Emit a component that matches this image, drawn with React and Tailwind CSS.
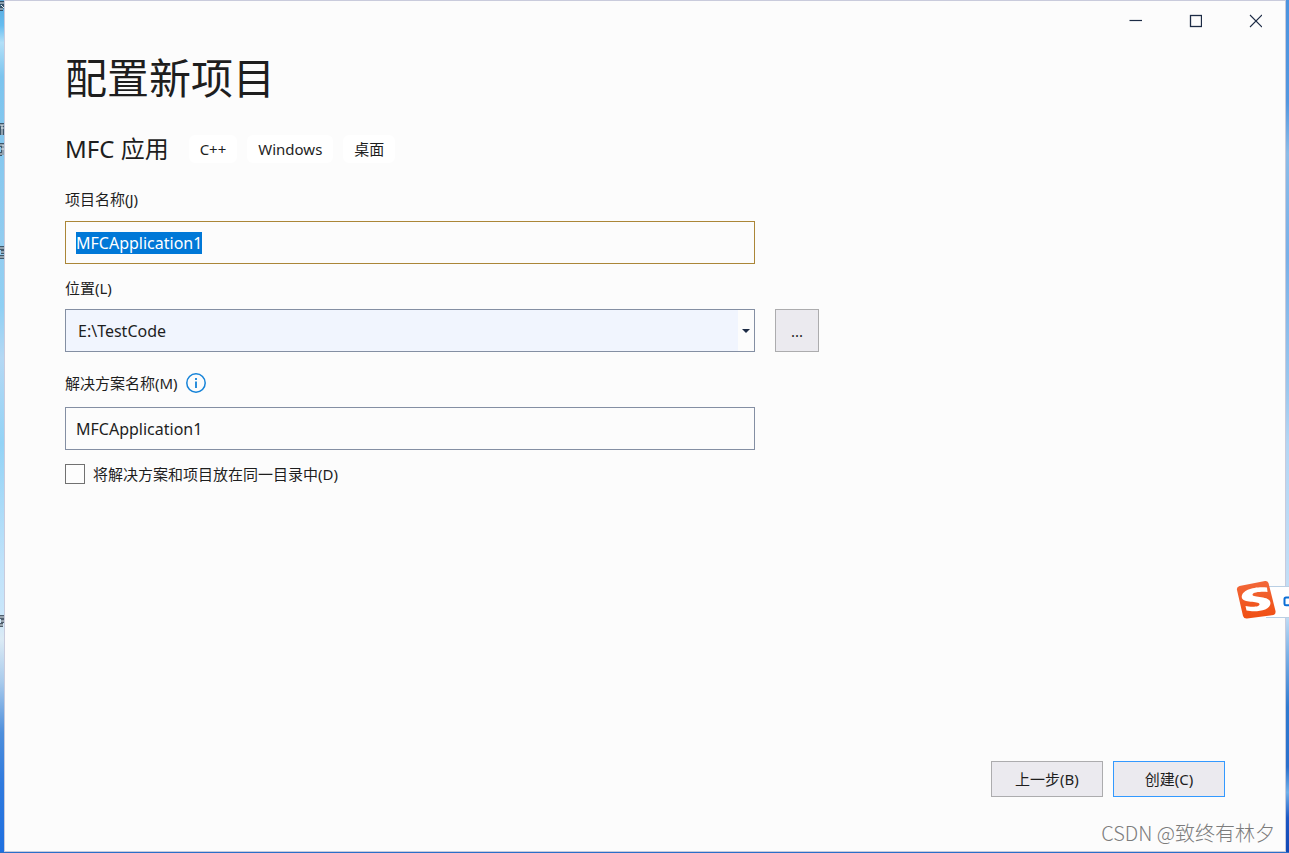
import { useEffect, useRef, useState } from "react";

const tags = ["C++", "Windows", "桌面"];

// pieces of desktop icon labels that stick out left of the window
const labelBits = [
  "M0 3h4M1 5l3 3M0 9h3",
  "M0 125h4M1 128h3M2 125v10",
  "M0 145h4M1 149h3M3 145v10M0 154h2",
  "M0 248h4M1 252h3M0 257h4",
  "M0 617h4M1 621h3M0 625h3",
];

function DesktopEdge() {
  return (
    <div className="relative w-1 shrink-0 overflow-hidden bg-[linear-gradient(to_bottom,#5aa9dc_0%,#66bdf0_3%,#b3e0f8_5%,#7cc4ee_9%,#93cdf0_30%,#8fd0f4_36%,#b4d8f4_42%,#93d3f6_52%,#bfe2fa_66%,#c9e6fa_72%,#dcebf5_75%,#a9cbec_80%,#4e8fdc_86%,#2f7ade_92%,#1f70e0_100%)]">
      <svg className="absolute left-0 top-0" width="4" height="640" fill="none" aria-hidden="true">
        {labelBits.map((d) => (
          <g key={d}>
            <path d={d} stroke="#25323f" strokeWidth="4" opacity="0.75" />
            <path d={d} stroke="#e4edf3" strokeWidth="1" />
          </g>
        ))}
      </svg>
    </div>
  );
}

function WindowButtons() {
  return (
    <div className="flex h-10 justify-end">
      <button type="button" aria-label="最小化" className="flex w-15 items-center justify-center">
        <svg width="14" height="14" stroke="#1c2b45" fill="none"><path d="M1.500 6.500h13" strokeWidth="1.200" /></svg>
      </button>
      <button type="button" aria-label="最大化" className="flex w-15 items-center justify-center">
        <svg width="14" height="14" stroke="#1c2b45" fill="none"><rect x="2.500" y="1.500" width="11" height="11" strokeWidth="1.300" /></svg>
      </button>
      <button type="button" aria-label="关闭" className="flex w-15 items-center justify-center">
        <svg width="14" height="14" stroke="#1c2b45" fill="none"><path d="M2 1l12 12M14 1L2 13" strokeWidth="1.100" /></svg>
      </button>
    </div>
  );
}

function ImeBar() {
  return (
    <div className="absolute right-0 top-[580px]">
      <svg width="53" height="40" viewBox="0 0 53 40" fill="none" role="img" aria-label="输入法">
        <path d="M30 6.500H53V37.500H30Z" fill="#fff" />
        <path d="M30 6.500H53M30 37.500H53" stroke="#b9cfe4" />
        <path d="M53 17.500H50Q48.500 17.500 48.500 19V24Q48.500 25.200 50 25.200H53" stroke="#0b6fd6" strokeWidth="2" />
        <defs>
          <linearGradient id="ime" x1="0" y1="0" x2="0" y2="1">
            <stop offset="0" stopColor="#f2683a" />
            <stop offset="1" stopColor="#f04e12" />
          </linearGradient>
        </defs>
        <path d="M3.500 6L29 1Q31.500 .6 32.500 3L39.500 31Q40 34 37.500 35L11 38.500Q8 38.800 7 36L1 10Q.3 7 3.500 6Z" fill="url(#ime)" />
        <path d="M31 7.500C20 6 5 9.500 5.800 17.500C6.500 23.500 23 20.800 23.500 24C24 27.500 14 27 9.500 26L10.500 30.500C19 32.500 34.500 31 34.500 23C34.500 15.500 16.500 18 16.500 14.800C16.500 12 26 11.500 31.500 12Z" fill="#fff" />
      </svg>
    </div>
  );
}

export default function App() {
  const [projectName, setProjectName] = useState("MFCApplication1");
  const [solutionName, setSolutionName] = useState("MFCApplication1");
  const [location, setLocation] = useState("E:\\TestCode");
  const [sameDir, setSameDir] = useState(false);
  const nameRef = useRef(null);

  useEffect(() => {
    nameRef.current.focus();
    nameRef.current.select();
  }, []);

  return (
    <div className="relative flex min-h-screen overflow-hidden bg-[#2a6fc9] pb-px font-['Noto_Sans','Noto_Sans_CJK_SC',sans-serif] text-[15px] leading-5 text-[#1e1e1e]">
      <DesktopEdge />

      <main className="flex min-w-0 flex-1 flex-col border border-[#c9cbdc] bg-[#fcfcfc]">
        <WindowButtons />

        <form className="flex flex-1 flex-col pl-15 pr-15 pb-[54px]" onSubmit={(e) => e.preventDefault()}>
          <h1 className="mt-2 text-[42px] leading-[58px]">配置新项目</h1>

          <div className="mt-7 flex items-center gap-5">
            <h2 className="text-2xl leading-7">MFC 应用</h2>
            <ul className="flex gap-2.5">
              {tags.map((tag) => (
                <li key={tag} className="rounded-md bg-white px-[11px] py-1">{tag}</li>
              ))}
            </ul>
          </div>

          <label htmlFor="project" className="mt-[26px] self-start">项目名称(J)</label>
          <input
            id="project"
            ref={nameRef}
            className="mt-3 h-[43px] w-full max-w-[690px] border border-[#ab8637] px-2.5 text-base leading-5 outline-none selection:bg-[#0078d7] selection:text-white"
            value={projectName}
            onChange={(e) => setProjectName(e.target.value)}
          />

          <label htmlFor="location" className="mt-3.5 self-start">位置(L)</label>
          <div className="mt-[11px] flex gap-5">
            <div className="relative w-full max-w-[690px]">
              <select
                id="location"
                className="h-[43px] w-full appearance-none border border-[#848fa3] bg-[#f1f5fe] px-3 text-base outline-none"
                value={location}
                onChange={(e) => setLocation(e.target.value)}
              >
                <option>E:\TestCode</option>
              </select>
              <span className="pointer-events-none absolute inset-y-px right-px flex w-4 items-center justify-center bg-[#fcfcfc]">
                <svg width="8" height="4"><path d="M0 0H8L4 4Z" fill="#1c2b45" /></svg>
              </span>
            </div>
            <button type="button" className="h-[43px] w-11 shrink-0 border border-[#acacae] bg-[#ebeaef]">...</button>
          </div>

          <div className="mt-[21px] flex items-center gap-2">
            <label htmlFor="solution">解决方案名称(M)</label>
            <svg width="20" height="20" fill="none" role="img" aria-label="信息">
              <circle cx="10" cy="10" r="9.200" stroke="#1583d8" strokeWidth="1.500" />
              <path d="M10 8.500V15M10 5V7" stroke="#1583d8" strokeWidth="1.800" />
            </svg>
          </div>
          <input
            id="solution"
            className="mt-3.5 h-[43px] w-full max-w-[690px] border border-[#848fa3] px-2.5 text-base leading-5 outline-none"
            value={solutionName}
            onChange={(e) => setSolutionName(e.target.value)}
          />

          <label className="mt-3.5 flex items-center gap-2 self-start">
            <input
              type="checkbox"
              className="size-5 appearance-none border border-[#717171] bg-[#fdfdfd] checked:bg-[#0078d7]"
              checked={sameDir}
              onChange={(e) => setSameDir(e.target.checked)}
            />
            将解决方案和项目放在同一目录中(D)
          </label>

          <div className="mt-auto flex justify-end gap-2.5">
            <button type="button" className="h-9 w-28 border border-[#acacae] bg-[#ebeaef]">上一步(B)</button>
            <button type="submit" className="h-9 w-28 border border-[#3399ff] bg-[#ebeaef]">创建(C)</button>
          </div>
        </form>
      </main>

      <div className="w-[3px] shrink-0 bg-[linear-gradient(to_bottom,#4c94df_0%,#5398e0_12%,#8bbce8_18%,#78b0e8_30%,#9cc8ee_46%,#b4d6f4_52%,#c5e0f7_72%,#7ab0e6_77%,#2f7bd0_83%,#2a70cc_90%,#6fb0ea_93%,#1c58c4_96%,#1148b5_100%)]" />

      <ImeBar />
      <p className="absolute bottom-2 right-3.5 font-['Noto_Sans_CJK_SC',sans-serif] text-xl leading-6 font-light text-[#7c7c7c]">CSDN @致终有林夕</p>
    </div>
  );
}
